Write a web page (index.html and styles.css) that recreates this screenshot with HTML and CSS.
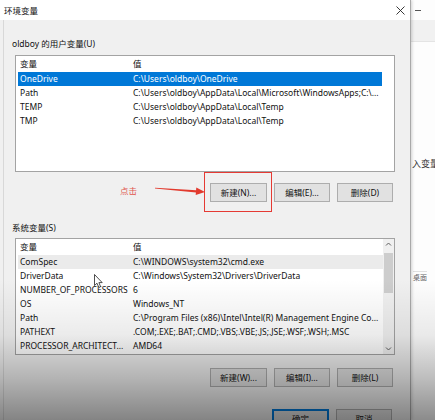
FILE: index.html
```html
<!DOCTYPE html>
<html lang="zh-CN">
<head>
<meta charset="utf-8">
<title>环境变量</title>
<link rel="stylesheet" href="styles.css">
</head>
<body>
<div class="screen">
  <div class="dialog">
    <div class="titlebar">
      <span class="title">环境变量</span>
      <svg class="close" width="9" height="9" viewBox="0 0 9 9"><path d="M0.5 0.5L8.5 8.5M8.5 0.5L0.5 8.5" stroke="#222" stroke-width="0.9" fill="none"/></svg>
    </div>
    <div class="client">
      <section class="group group-user">
        <div class="group-label">oldboy 的用户变量(U)</div>
        <div class="list list-user">
          <div class="row head"><span>变量</span><span>值</span></div>
          <div class="row selected"><span>OneDrive</span><span>C:\Users\oldboy\OneDrive</span></div>
          <div class="row"><span>Path</span><span>C:\Users\oldboy\AppData\Local\Microsoft\WindowsApps;C:\...</span></div>
          <div class="row"><span>TEMP</span><span>C:\Users\oldboy\AppData\Local\Temp</span></div>
          <div class="row"><span>TMP</span><span>C:\Users\oldboy\AppData\Local\Temp</span></div>
        </div>
        <div class="btn-row">
          <span class="hint">点击</span>
          <svg class="arrow" width="56" height="16" viewBox="0 0 56 16"><polygon points="2,4.7 43.3,7.2 43.1,9.4 2,5.4" fill="#e23a2e"/><polygon points="52,9 43.3,4.6 42.7,12" fill="#e23a2e"/></svg>
          <span class="mark"></span>
          <button class="btn w57">新建(N)...</button>
          <button class="btn">编辑(E)...</button>
          <button class="btn">删除(D)</button>
        </div>
      </section>
      <section class="group group-sys">
        <div class="group-label">系统变量(S)</div>
        <div class="list list-sys">
          <div class="rows">
            <div class="row head"><span>变量</span><span>值</span></div>
            <div class="row hover"><span>ComSpec</span><span>C:\WINDOWS\system32\cmd.exe</span></div>
            <div class="row"><span>DriverData</span><span>C:\Windows\System32\Drivers\DriverData</span></div>
            <div class="row"><span>NUMBER_OF_PROCESSORS</span><span>6</span></div>
            <div class="row"><span>OS</span><span>Windows_NT</span></div>
            <div class="row"><span>Path</span><span>C:\Program Files (x86)\Intel\Intel(R) Management Engine Co...</span></div>
            <div class="row"><span>PATHEXT</span><span>.COM;.EXE;.BAT;.CMD;.VBS;.VBE;.JS;.JSE;.WSF;.WSH;.MSC</span></div>
            <div class="row"><span>PROCESSOR_ARCHITECT...</span><span>AMD64</span></div>
          </div>
          <div class="scrollbar">
            <svg class="chev" width="11" height="10" viewBox="0 0 11 10"><path d="M3 6.5L5.5 4L8 6.5" stroke="#606060" stroke-width="1" fill="none"/></svg>
            <div class="thumb"></div>
            <div class="track"></div>
            <svg class="chev" width="11" height="10" viewBox="0 0 11 10"><path d="M3 3.5L5.5 6L8 3.5" stroke="#606060" stroke-width="1" fill="none"/></svg>
          </div>
        </div>
        <div class="btn-row">
          <button class="btn w57">新建(W)...</button>
          <button class="btn">编辑(I)...</button>
          <button class="btn">删除(L)</button>
        </div>
      </section>
      <div class="dialog-buttons">
        <button class="btn w57 default">确定</button>
        <button class="btn">取消</button>
      </div>
    </div>
  </div>
  <div class="backwin">
    <div class="back-top"><span class="minus"></span></div>
    <div class="back-band"></div>
    <div class="back-text t1">入变量</div>
    <div class="back-text t2">桌面</div>
  </div>
  <div class="vignette"></div>
  <svg class="cursor" width="10" height="15" viewBox="0 0 10 15"><path d="M0.5 0.5L0.5 11.5L3 9.2L4.8 13.5L6.6 12.7L4.9 8.6L8.2 8.6Z" fill="#fff" stroke="#222" stroke-width="0.8" stroke-linejoin="round"/></svg>
</div>
</body>
</html>
```
FILE: styles.css
```css
* { box-sizing: border-box; margin: 0; padding: 0; }
html, body { width: 435px; height: 420px; overflow: hidden; }
body {
  font-family: "Noto Sans", "Noto Sans CJK SC", sans-serif;
  font-size: 8.5px;
  color: #111;
  background: #fff;
}
.screen { position: relative; display: flex; width: 435px; height: 420px; overflow: hidden; }

.dialog {
  position: relative;
  z-index: 1;
  width: 411px;
  flex: none;
  display: flex;
  flex-direction: column;
  background: #f0f0f0;
  border-right: 1px solid #a9a9a9;
  box-shadow: 1px 0 3px rgba(0, 0, 0, 0.18);
}
.titlebar {
  height: 20px;
  flex: none;
  display: flex;
  align-items: center;
  justify-content: space-between;
  padding: 0 5px 0 4px;
  background: #fff;
}
.title { font-size: 8.5px; line-height: 11px; }
.close { display: block; margin-top: 0; }

.client {
  flex: 1;
  margin-left: 3px;
  border-left: 1px solid #d8d8d8;
  padding-left: 8px;
  display: flex;
  flex-direction: column;
}
.group { display: flex; flex-direction: column; }
.group-user { padding-top: 18px; }
.group-sys { padding-top: 20px; }
.group-label { line-height: 11px; height: 11px; }
.list {
  margin-left: 3px;
  width: 380px;
  height: 117px;
  background: #fff;
  border: 1px solid #a3a3a3;
}
.list-user { margin-top: 6px; padding: 0 12px 0 2px; }
.list-sys { margin-top: 5px; padding: 0 0 0 2px; display: flex; }
.rows { flex: 1; min-width: 0; }

.row {
  display: grid;
  grid-template-columns: 113px 1fr;
  height: 14px;
  line-height: 14px;
  white-space: nowrap;
}
.row span { padding-left: 2px; overflow: hidden; }
.row.head { height: 16px; line-height: 16px; }
.row.selected { background: #0078d7; color: #fff; }
.row.hover { background: #ebebeb; }

.scrollbar {
  width: 11px;
  flex: none;
  display: flex;
  flex-direction: column;
  background: #f0f0f0;
}
.chev { display: block; flex: none; }
.thumb { height: 40px; margin: 4px 1px 0; background: #cdcdcd; flex: none; }
.track { flex: 1; }

.btn-row {
  position: relative;
  margin-left: 3px;
  width: 380px;
  height: 19px;
  padding-right: 2px;
  display: flex;
  justify-content: flex-end;
  gap: 7px;
}
.group-user .btn-row { margin-top: 11px; }
.group-sys .btn-row { margin-top: 13px; }

.btn {
  width: 56px;
  height: 19px;
  flex: none;
  font: inherit;
  color: #111;
  background: #e1e1e1;
  border: 1px solid #adadad;
  line-height: 17px;
  text-align: center;
}
.btn.w57 { width: 57px; }
.btn.default { border: 1px solid #0078d7; box-shadow: inset 0 0 0 1px #0078d7; }

.hint {
  position: absolute;
  left: 105px;
  top: 2px;
  line-height: 11px;
  color: #e0574c;
}
.arrow { position: absolute; left: 138px; top: 0; }
.mark {
  position: absolute;
  left: 189px;
  top: -11px;
  width: 68px;
  height: 40px;
  border: 1.5px solid #e53a33;
}

.dialog-buttons {
  margin-top: 22px;
  margin-left: 3px;
  width: 377px;
  display: flex;
  justify-content: flex-end;
  gap: 7px;
}

.backwin {
  position: relative;
  flex: 1;
  overflow: hidden;
  background: #fdfdfd;
}
.back-top { height: 20px; display: flex; align-items: center; padding-left: 4px; }
.minus { width: 6px; height: 1px; background: #555; }
.back-band { height: 22px; background: #f1f1f1; border-bottom: 1px solid #e4e4e4; }
.back-text { position: absolute; left: 1px; white-space: nowrap; color: #333; font-size: 9px; }
.t1 { top: 157px; }
.t2 { top: 271px; left: 2px; color: #666; font-size: 7px; border-top: 1px solid #e0e0e0; }

.vignette {
  position: absolute;
  inset: 0;
  z-index: 3;
  pointer-events: none;
  background: linear-gradient(to bottom,
    rgba(0,0,0,0) 280px,
    rgba(0,0,0,0.08) 335px,
    rgba(0,0,0,0.25) 378px,
    rgba(0,0,0,0.45) 420px);
}
.cursor { position: absolute; left: 94px; top: 274px; z-index: 4; }
```
